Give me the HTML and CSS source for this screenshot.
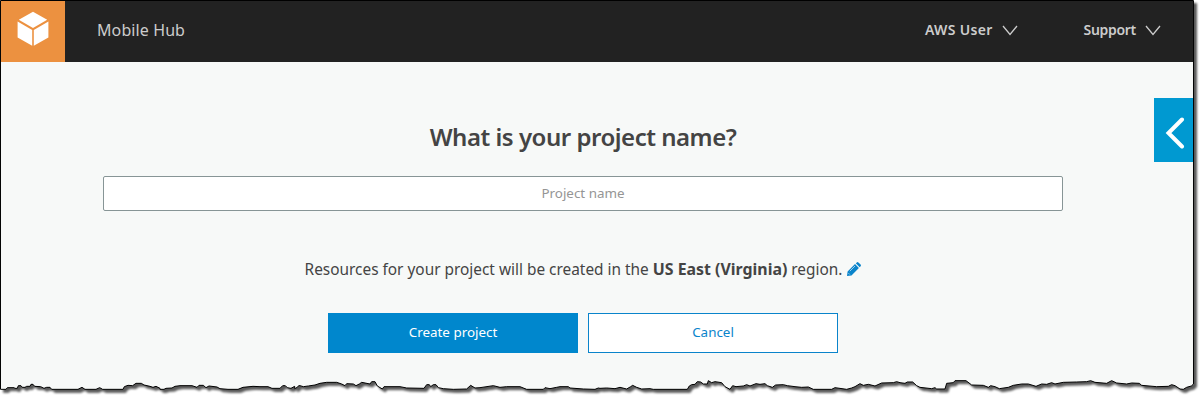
FILE: index.html
```html
<!DOCTYPE html>
<html lang="en">
<head>
<meta charset="utf-8">
<title>Mobile Hub</title>
<link rel="stylesheet" href="styles.css">
</head>
<body>
<div class="page">
  <svg class="sheet" width="1204" height="400" viewBox="0 0 1204 400" aria-hidden="true">
    <g transform="translate(0 360) scale(.33333)">
      <path class="sheet-paper" d="M1.5 -1078.5V88H18L22 83H42L45 85H52L55 77H63L67 82H75L80 79H90L93 73H99L104 79L122 80L132 85L140 82H150L155 88H234L246 82L255 88H288L299 83L308 88H369L373 80L384 76L398 77L408 70H424L432 75L450 79L459 82L468 79L480 85V88H492L498 85L516 84L525 79L540 77H576L591 82L597 76H610L618 83L627 78L651 81L660 86L684 88H714L729 82L759 79L780 80H804L816 85H840L848 77H856L862 83L873 85L884 79V86L892 82L896 77L900 77L910 80L925 78L945 75L960 70L980 67H1010L1025 72L1035 77L1040 71L1060 72L1068 77L1078 72L1085 67L1110 72L1115 65H1125L1132 78L1147 87L1152 80H1200L1220 84L1272 85L1280 74H1288L1292 80L1300 74H1308L1315 83L1330 86L1360 88L1400 87L1412 76L1425 84L1440 83L1480 77L1500 82L1520 80H1560L1580 88H1630L1635 83L1650 86L1670 82L1680 80H1705L1710 84L1750 87L1785 88L1795 84L1800 85L1820 84L1845 86L1860 82L1880 87L1892 80L1898 76L1910 82L1925 87L1950 86L1960 88H2062L2068 78L2075 74L2085 73L2092 65L2102 66L2110 72H2122L2125 62L2135 68L2145 65L2165 68L2175 80L2190 88L2198 77L2208 80L2230 78L2240 74L2250 78L2268 71L2280 73L2295 71L2302 77L2317 82L2327 75L2350 74L2362 77L2385 80L2405 82L2425 81L2440 88H2495L2505 83L2540 88L2555 84L2565 80L2580 71L2590 76L2605 73L2625 78L2645 69L2680 68L2690 65L2700 68L2715 70L2722 66H2738L2750 77L2760 82L2795 86L2805 83L2810 87H2835L2840 70L2860 68L2865 62H2898L2915 75L2950 76L2965 82L2972 77L2985 80L2998 86L3025 82L3040 76L3065 72H3085L3108 79L3125 72L3140 73L3155 68L3165 72L3190 67L3230 66L3260 65L3272 62L3285 67L3320 70L3335 62L3350 69L3380 72L3395 69L3418 70L3425 76L3470 80L3505 79L3515 74L3525 77L3540 87L3550 88L3560 82L3574 78L3580.5 72V-1078.5Z"/>
    </g>
  </svg>
  <header class="topbar">
    <div class="logo">
      <svg width="32" height="36" viewBox="0 0 32 36" fill="#fff"><path d="M16 .8L30.2 8.7L16 17L1.8 8.7ZM.6 10.5L15.2 19V34.7L.6 26.5ZM31.4 10.5L16.8 19V34.7L31.4 26.5Z"/></svg>
    </div>
    <div class="brand">Mobile Hub</div>
    <nav class="menu">
      <a class="menu-item user">AWS User<svg class="caret" width="16" height="11" viewBox="0 0 16 11"><path d="M1 1L8 9.5L15 1"/></svg></a>
      <a class="menu-item support">Support<svg class="caret" width="16" height="11" viewBox="0 0 16 11"><path d="M1 1L8 9.5L15 1"/></svg></a>
    </nav>
  </header>
  <main class="content">
    <h1 class="title">What is your project name?</h1>
    <input class="field" type="text" placeholder="Project name">
    <p class="region"><span>Resources for your project will be created in the <b>US East (Virginia)</b> region.</span>
      <svg class="pencil" width="14" height="14" viewBox="0 0 14 14"><path d="M8 2.1L11.9 6L4.5 13.4L0 14L.6 9.5ZM8.8 1.3L9.8.4Q10.6-.3 11.4.4L13.6 2.6Q14.3 3.4 13.6 4.2L12.7 5.2Z"/><path class="pencil-shine" d="M2.8 9.2L8 4M1.5 11.2L2.8 12.5"/></svg>
    </p>
    <div class="actions">
      <button class="btn primary">Create project</button>
      <button class="btn">Cancel</button>
    </div>
  </main>
  <button class="drawer" aria-label="Open panel"><svg width="20" height="32" viewBox="0 0 20 32"><path d="M17 2.5L3.5 16L17 29.5"/></svg></button>
</div>
</body>
</html>
```
FILE: styles.css
```css
* { box-sizing: border-box; }
body { margin: 0; background: #fff; font-family: "Noto Sans", sans-serif; color: #444; }
.page { position: relative; width: 1204px; height: 400px; overflow: hidden; }
.sheet { position: absolute; left: 0; top: 0; filter: drop-shadow(3px 3px 1.2px rgba(0,0,0,.65)); }
.sheet-paper { fill: #f7f9f8; stroke: #000; stroke-width: 3; }
.topbar { position: relative; display: flex; align-items: center; height: 61px; margin: 1px 11px 0 1px; background: #222; color: #ccc; }
.logo { display: flex; justify-content: center; width: 64px; height: 61px; padding-top: 10px; background: #ec9140; }
.brand { margin-left: 32px; font-size: 16px; line-height: 22px; letter-spacing: .1px; padding-bottom: 3px; }
.menu { display: flex; gap: 66px; margin-left: auto; padding: 0 32px 3px 0; font-size: 14px; font-weight: 600; line-height: 20px; }
.menu-item { display: flex; align-items: center; gap: 9px; }
.user { letter-spacing: .3px; }
.support { letter-spacing: -.3px; }
.caret { fill: none; stroke: #ccc; stroke-width: 1.3; }
.content { position: relative; display: flex; flex-direction: column; align-items: center; width: 960px; margin: 57px 0 0 103px; }
.title { margin: 0; height: 36px; font-size: 24px; line-height: 36px; font-weight: 600; letter-spacing: -.48px; white-space: nowrap; }
.field { width: 960px; height: 35px; margin-top: 21px; padding: 0 0 2px; border: 1px solid #879596; border-radius: 2px; background: #fff; text-align: center; font: 13.4px "Noto Sans", sans-serif; }
.field::placeholder { color: #959595; opacity: 1; }
.region { display: flex; align-items: center; gap: 5px; margin: 46px 0 0; height: 24px; font-size: 15.4px; line-height: 24px; white-space: nowrap; }
.region b { font-size: 15.9px; }
.pencil { fill: #0a84cb; }
.pencil-shine { fill: none; stroke: #c4e2f2; stroke-width: .8; }
.actions { display: flex; gap: 10px; margin-top: 32px; }
.btn { width: 250px; height: 40px; padding: 0 0 2px; border: 1px solid #0a84cb; background: #fff; color: #0a84cb; font: 13.4px "Noto Sans", sans-serif; }
.primary { border-color: #0087cd; background: #0087cd; color: #fff; }
.drawer { position: absolute; left: 1154px; top: 98px; display: flex; align-items: center; width: 39px; height: 64px; padding: 5px 0 0 11px; border: 0; background: #0099d1; }
.drawer path { fill: none; stroke: #fff; stroke-width: 4; stroke-linecap: round; }
```
